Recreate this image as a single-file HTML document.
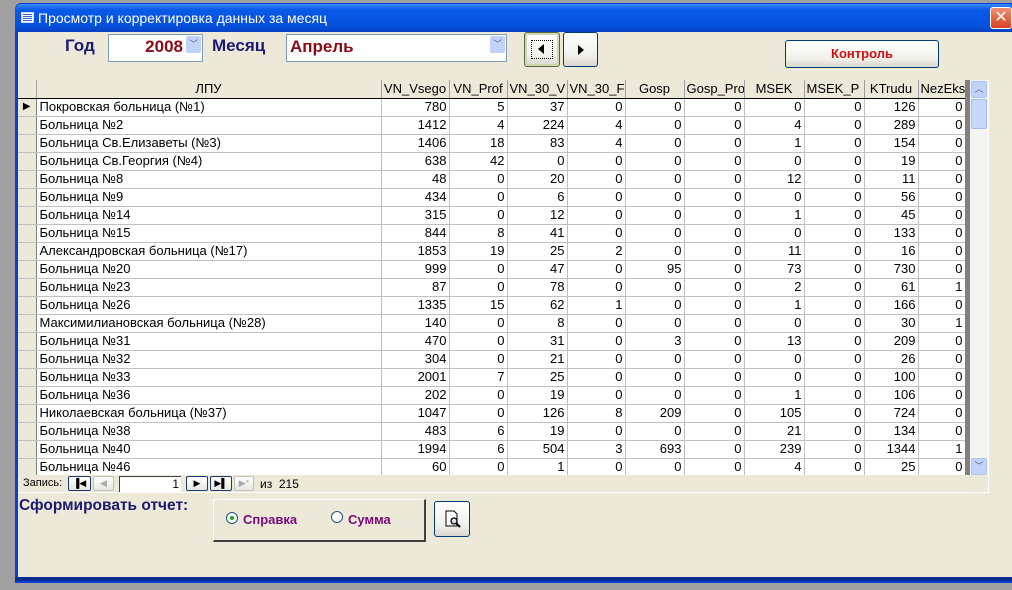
<!DOCTYPE html>
<html><head><meta charset="utf-8"><style>
*{margin:0;padding:0;box-sizing:border-box}
body{width:1012px;height:590px;background:#a0a0a0;position:relative;overflow:hidden;font-family:"Liberation Sans",Arial,sans-serif}
.a{position:absolute}
#win{left:15px;top:3px;width:1010px;height:580px;background:#0a3fd4;border-radius:6px 6px 0 0}
#title{left:15px;top:4px;width:1000px;height:28px;background:linear-gradient(#3a8cf8,#0a5ae8 20%,#0550dc 80%,#0840c0);border-radius:6px 6px 0 0}
#client{left:18px;top:32px;width:1000px;height:545px;background:#ece9d8}
.ttl{left:38px;top:10px;color:#fff;font-size:14px}
.lbl{font-weight:bold;color:#1c1a70;font-size:17px}
.combo{background:#fff;border:1px solid #7f9db9}
.dd{position:absolute;right:1px;top:1px;width:15px;height:17px;background:#c1d3fb;border-radius:2px;color:#4d6185;font-size:9px;text-align:center;line-height:17px}
.btn{background:linear-gradient(#fff,#f0f0ea 70%,#d8d6cc);border:1px solid #003c74;border-radius:3px}
table{border-collapse:collapse;table-layout:fixed;font-size:13px}
td{height:18px;border-right:1px solid #c0c0c0;border-bottom:1px solid #c0c0c0;padding:0 2px;white-space:nowrap;overflow:hidden;text-align:right;background:#fff;line-height:16px}
td.n{text-align:left;padding-left:3px}
td.s{background:#ece9d8;border-right:1px solid #808080;border-bottom:1px solid #c0c0c0}
tr.h td{background:#ece9d8;text-align:center;border-bottom:1px solid #000;border-right:1px solid #a0a0a0}
.nb{top:476px;height:15px;background:linear-gradient(#fff,#e8e8e0);border:1px solid #1c3c70;border-radius:2px;font-size:9px;text-align:center;line-height:13px}
</style></head><body>
<div class="a" id="win"></div>
<div class="a" id="title"></div>
<div class="a" style="left:21px;top:12px;width:13px;height:11px;background:#fff;border:1px solid #cde"></div>
<div class="a" style="left:23px;top:14px;width:9px;height:1px;background:#36c;box-shadow:0 2px #36c,0 4px #36c,0 6px #36c"></div>
<div class="a ttl">Просмотр и корректировка данных за месяц</div>
<div class="a" style="left:990px;top:7px;width:22px;height:22px;background:linear-gradient(#f09070,#d84020);border:1px solid #fff;border-radius:3px;color:#fff;font-size:16px;text-align:center;line-height:20px">✕</div>
<div class="a" id="client"></div>

<div class="a lbl" style="left:65px;top:36px">Год</div>
<div class="a combo" style="left:108px;top:34px;width:95px;height:28px"><span class="a" style="right:19px;top:2px;font-weight:bold;font-size:17px;color:#8b0a14">2008</span><div class="dd">﹀</div></div>
<div class="a lbl" style="left:212px;top:36px">Месяц</div>
<div class="a combo" style="left:286px;top:34px;width:221px;height:28px"><span class="a" style="left:3px;top:2px;font-weight:bold;font-size:17px;color:#8b0a14">Апрель</span><div class="dd">﹀</div></div>
<div class="a btn" style="left:524px;top:32px;width:36px;height:35px;border-color:#5a6a40;box-shadow:inset 0 0 0 2px #cfd8b0"><div class="a" style="left:6px;top:7px;width:22px;height:19px;border:1px dotted #000"></div><div class="a" style="left:13px;top:11px;width:0;height:0;border-top:5px solid transparent;border-bottom:5px solid transparent;border-right:6px solid #000"></div></div>
<div class="a btn" style="left:563px;top:32px;width:35px;height:35px"><div class="a" style="left:14px;top:12px;width:0;height:0;border-top:5px solid transparent;border-bottom:5px solid transparent;border-left:6px solid #000"></div></div>
<div class="a btn" style="left:785px;top:40px;width:154px;height:28px;text-align:center;line-height:26px;font-weight:bold;font-size:13px;color:#d01010">Контроль</div>

<div class="a" style="left:18px;top:80px;width:971px;height:413px;background:#ece9d8;border-right:1px solid #fff;border-bottom:1px solid #fff"></div>
<div class="a" style="left:18px;top:80px;width:947px;height:395px;overflow:hidden;background:#fff">
<table style="width:947px">
<colgroup><col style="width:18px"><col style="width:345px"><col style="width:68px"><col style="width:58px"><col style="width:60px"><col style="width:58px"><col style="width:59px"><col style="width:60px"><col style="width:60px"><col style="width:60px"><col style="width:54px"><col style="width:47px"></colgroup>
<tr class="h"><td class="s"></td><td>ЛПУ</td><td>VN_Vsego</td><td>VN_Prof</td><td>VN_30_V</td><td style="text-align:left">VN_30_F</td><td>Gosp</td><td style="text-align:left">Gosp_Pro</td><td>MSEK</td><td style="text-align:left">MSEK_P</td><td>KTrudu</td><td style="text-align:left">NezEks</td></tr>
<tr><td class="s" style="font-size:10px;text-align:center;padding:0">▶</td><td class="n">Покровская больница (№1)</td><td>780</td><td>5</td><td>37</td><td>0</td><td>0</td><td>0</td><td>0</td><td>0</td><td>126</td><td>0</td></tr>
<tr><td class="s"></td><td class="n">Больница №2</td><td>1412</td><td>4</td><td>224</td><td>4</td><td>0</td><td>0</td><td>4</td><td>0</td><td>289</td><td>0</td></tr>
<tr><td class="s"></td><td class="n">Больница Св.Елизаветы (№3)</td><td>1406</td><td>18</td><td>83</td><td>4</td><td>0</td><td>0</td><td>1</td><td>0</td><td>154</td><td>0</td></tr>
<tr><td class="s"></td><td class="n">Больница Св.Георгия (№4)</td><td>638</td><td>42</td><td>0</td><td>0</td><td>0</td><td>0</td><td>0</td><td>0</td><td>19</td><td>0</td></tr>
<tr><td class="s"></td><td class="n">Больница №8</td><td>48</td><td>0</td><td>20</td><td>0</td><td>0</td><td>0</td><td>12</td><td>0</td><td>11</td><td>0</td></tr>
<tr><td class="s"></td><td class="n">Больница №9</td><td>434</td><td>0</td><td>6</td><td>0</td><td>0</td><td>0</td><td>0</td><td>0</td><td>56</td><td>0</td></tr>
<tr><td class="s"></td><td class="n">Больница №14</td><td>315</td><td>0</td><td>12</td><td>0</td><td>0</td><td>0</td><td>1</td><td>0</td><td>45</td><td>0</td></tr>
<tr><td class="s"></td><td class="n">Больница №15</td><td>844</td><td>8</td><td>41</td><td>0</td><td>0</td><td>0</td><td>0</td><td>0</td><td>133</td><td>0</td></tr>
<tr><td class="s"></td><td class="n">Александровская больница (№17)</td><td>1853</td><td>19</td><td>25</td><td>2</td><td>0</td><td>0</td><td>11</td><td>0</td><td>16</td><td>0</td></tr>
<tr><td class="s"></td><td class="n">Больница №20</td><td>999</td><td>0</td><td>47</td><td>0</td><td>95</td><td>0</td><td>73</td><td>0</td><td>730</td><td>0</td></tr>
<tr><td class="s"></td><td class="n">Больница №23</td><td>87</td><td>0</td><td>78</td><td>0</td><td>0</td><td>0</td><td>2</td><td>0</td><td>61</td><td>1</td></tr>
<tr><td class="s"></td><td class="n">Больница №26</td><td>1335</td><td>15</td><td>62</td><td>1</td><td>0</td><td>0</td><td>1</td><td>0</td><td>166</td><td>0</td></tr>
<tr><td class="s"></td><td class="n">Максимилиановская больница (№28)</td><td>140</td><td>0</td><td>8</td><td>0</td><td>0</td><td>0</td><td>0</td><td>0</td><td>30</td><td>1</td></tr>
<tr><td class="s"></td><td class="n">Больница №31</td><td>470</td><td>0</td><td>31</td><td>0</td><td>3</td><td>0</td><td>13</td><td>0</td><td>209</td><td>0</td></tr>
<tr><td class="s"></td><td class="n">Больница №32</td><td>304</td><td>0</td><td>21</td><td>0</td><td>0</td><td>0</td><td>0</td><td>0</td><td>26</td><td>0</td></tr>
<tr><td class="s"></td><td class="n">Больница №33</td><td>2001</td><td>7</td><td>25</td><td>0</td><td>0</td><td>0</td><td>0</td><td>0</td><td>100</td><td>0</td></tr>
<tr><td class="s"></td><td class="n">Больница №36</td><td>202</td><td>0</td><td>19</td><td>0</td><td>0</td><td>0</td><td>1</td><td>0</td><td>106</td><td>0</td></tr>
<tr><td class="s"></td><td class="n">Николаевская больница (№37)</td><td>1047</td><td>0</td><td>126</td><td>8</td><td>209</td><td>0</td><td>105</td><td>0</td><td>724</td><td>0</td></tr>
<tr><td class="s"></td><td class="n">Больница №38</td><td>483</td><td>6</td><td>19</td><td>0</td><td>0</td><td>0</td><td>21</td><td>0</td><td>134</td><td>0</td></tr>
<tr><td class="s"></td><td class="n">Больница №40</td><td>1994</td><td>6</td><td>504</td><td>3</td><td>693</td><td>0</td><td>239</td><td>0</td><td>1344</td><td>1</td></tr>
<tr><td class="s"></td><td class="n">Больница №46</td><td>60</td><td>0</td><td>1</td><td>0</td><td>0</td><td>0</td><td>4</td><td>0</td><td>25</td><td>0</td></tr>
</table></div>
<div class="a" style="left:965px;top:80px;width:5px;height:395px;background:#808080"></div>
<div class="a" style="left:970px;top:80px;width:18px;height:395px;background:#f4f4f0"></div>
<div class="a" style="left:971px;top:81px;width:16px;height:17px;background:#c1d3fb;border:1px solid #b0c4f0;border-radius:2px;color:#4d6185;font-size:9px;text-align:center;line-height:15px">︿</div>
<div class="a" style="left:971px;top:99px;width:16px;height:30px;background:#c8d8fa;border:1px solid #a8bce8;border-radius:2px"></div>
<div class="a" style="left:971px;top:458px;width:16px;height:17px;background:#c1d3fb;border:1px solid #b0c4f0;border-radius:2px;color:#4d6185;font-size:9px;text-align:center;line-height:15px">﹀</div>

<div class="a" style="left:23px;top:477px;font-size:11px">Запись:</div>
<div class="a nb" style="left:68px;width:23px">▐◀</div>
<div class="a nb" style="left:93px;width:21px;border-color:#c0c0b8;color:#aaa">◀</div>
<div class="a" style="left:119px;top:476px;width:62px;height:16px;background:#fff;border-top:1px solid #404040;border-left:1px solid #404040;font-size:12px;text-align:right;padding-right:2px;line-height:15px">1</div>
<div class="a nb" style="left:186px;width:22px">▶</div>
<div class="a nb" style="left:210px;width:22px">▶▌</div>
<div class="a nb" style="left:234px;width:20px;border-color:#c0c0b8;color:#aaa">▶*</div>
<div class="a" style="left:260px;top:477px;font-size:12px">из&nbsp; 215</div>

<div class="a lbl" style="left:19px;top:497px;font-size:15.5px">Сформировать отчет:</div>
<div class="a" style="left:213px;top:499px;width:213px;height:43px;border-top:1px solid #fff;border-left:1px solid #fff;border-right:2px solid #404040;border-bottom:2px solid #404040"></div>
<div class="a" style="left:226px;top:512px;width:12px;height:12px;border-radius:50%;background:#fff;border:1px solid #1c5180"><div class="a" style="left:3px;top:3px;width:4px;height:4px;border-radius:50%;background:#21a121"></div></div>
<div class="a" style="left:243px;top:512px;font-weight:bold;font-size:13px;color:#7a0a7a">Справка</div>
<div class="a" style="left:331px;top:511px;width:12px;height:12px;border-radius:50%;background:#fff;border:1px solid #1c5180"></div>
<div class="a" style="left:348px;top:512px;font-weight:bold;font-size:13px;color:#7a0a7a">Сумма</div>
<div class="a btn" style="left:434px;top:501px;width:36px;height:36px"><svg class="a" style="left:9px;top:8px" width="18" height="18" viewBox="0 0 18 18"><path d="M2 1h8l3 3v12H2z" fill="#fff" stroke="#000"/><circle cx="10" cy="11" r="3" fill="#dde" stroke="#000" stroke-width="1.3"/><path d="M12 13l4 4" stroke="#000" stroke-width="2"/></svg></div>

<div class="a" style="left:15px;top:577px;width:1000px;height:4px;background:#0a2c90"></div>
</body></html>
